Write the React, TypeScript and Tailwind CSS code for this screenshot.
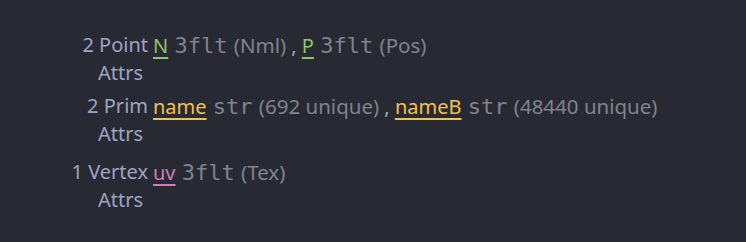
import React from 'react'

type Attr = { name: string; type: string; note: string; color: string }

const rows: { count: string; kind: string; attrs: Attr[]; mt: string }[] = [
  {
    count: '2',
    kind: 'Point',
    mt: 'mt-[31px]',
    attrs: [
      { name: 'N', type: '3flt', note: '(Nml)', color: 'text-[#8cc56a] decoration-[#8cc56a]' },
      { name: 'P', type: '3flt', note: '(Pos)', color: 'text-[#8cc56a] decoration-[#8cc56a]' },
    ],
  },
  {
    count: '2',
    kind: 'Prim',
    mt: 'mt-[5px]',
    attrs: [
      { name: 'name', type: 'str', note: '(692 unique)', color: 'text-[#f2c14e] decoration-[#f2c14e]' },
      { name: 'nameB', type: 'str', note: '(48440 unique)', color: 'text-[#f2c14e] decoration-[#f2c14e]' },
    ],
  },
  {
    count: '1',
    kind: 'Vertex',
    mt: 'mt-[10px]',
    attrs: [{ name: 'uv', type: '3flt', note: '(Tex)', color: 'text-[#d57ab8] decoration-[#d57ab8]' }],
  },
]

const App = () => {
  return (
    <div className="w-[746px] h-[242px] bg-[#282a33] overflow-hidden pl-[60px] text-[20px] leading-[28px] font-['Noto_Sans',sans-serif]">
      {rows.map((r, i) => (
        <div key={i} className={`flex ${r.mt}`}>
          <div className="w-[88px] shrink-0 text-[#9ea3c4]">
            <div className="text-right">{r.count} {r.kind}</div>
            <div className="ml-[38px]">Attrs</div>
          </div>
          <div className="ml-[5px] flex items-baseline whitespace-pre text-[#80838c]">
            {r.attrs.map((a, j) => (
              <span key={j}>
                {j > 0 && <span className="text-[#9ea3c4]"> , </span>}
                <span className={`${a.color} underline decoration-[1.5px] underline-offset-[4px]`}>{a.name}</span>
                <span> </span>
                <span className="ml-[1px] font-['DejaVu_Sans_Mono',monospace] text-[22px]">{a.type}</span>
                <span className="ml-[1px] text-[20.5px]"> {a.note}</span>
              </span>
            ))}
          </div>
        </div>
      ))}
    </div>
  )
}

export default App
